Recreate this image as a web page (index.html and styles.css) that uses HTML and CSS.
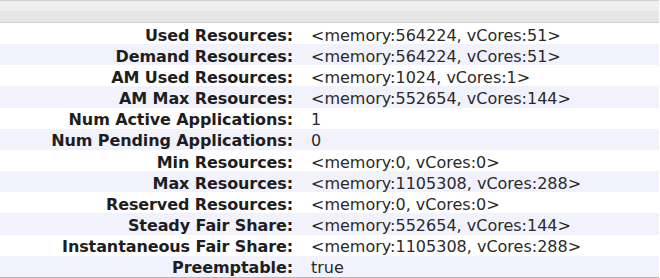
FILE: index.html
```html
<!DOCTYPE html>
<html>
<head>
<meta charset="utf-8">
<link rel="stylesheet" href="styles.css">
</head>
<body>
<div class="panel">
  <div class="panel-head"></div>
  <div class="info">
    <div class="row"><div class="label">Used Resources:</div><div class="value">&lt;memory:564224, vCores:51&gt;</div></div>
    <div class="row"><div class="label">Demand Resources:</div><div class="value">&lt;memory:564224, vCores:51&gt;</div></div>
    <div class="row"><div class="label">AM Used Resources:</div><div class="value">&lt;memory:1024, vCores:1&gt;</div></div>
    <div class="row"><div class="label">AM Max Resources:</div><div class="value">&lt;memory:552654, vCores:144&gt;</div></div>
    <div class="row"><div class="label">Num Active Applications:</div><div class="value">1</div></div>
    <div class="row"><div class="label">Num Pending Applications:</div><div class="value">0</div></div>
    <div class="row"><div class="label">Min Resources:</div><div class="value">&lt;memory:0, vCores:0&gt;</div></div>
    <div class="row"><div class="label">Max Resources:</div><div class="value">&lt;memory:1105308, vCores:288&gt;</div></div>
    <div class="row"><div class="label">Reserved Resources:</div><div class="value">&lt;memory:0, vCores:0&gt;</div></div>
    <div class="row"><div class="label">Steady Fair Share:</div><div class="value">&lt;memory:552654, vCores:144&gt;</div></div>
    <div class="row"><div class="label">Instantaneous Fair Share:</div><div class="value">&lt;memory:1105308, vCores:288&gt;</div></div>
    <div class="row"><div class="label">Preemptable:</div><div class="value">true</div></div>
  </div>
</div>
</body>
</html>
```
FILE: styles.css
```css
html, body {
  margin: 0;
  padding: 0;
  background: #fff;
}
.panel {
  width: 659px;
  font-family: "DejaVu Sans", Verdana, sans-serif;
  font-size: 16px;
  border-bottom: 1px solid #b4b4b4;
}
.panel-head {
  height: 21px;
  border-top: 1px solid #d0d0d0;
  border-bottom: 1px solid #cfcfcf;
  background: linear-gradient(#efefef 0, #efefef 50%, #e6e6e6 50%, #e6e6e6 100%);
}
.info {
  display: grid;
  grid-template-rows: repeat(12, 1fr);
  height: 254px;
}
.row {
  display: grid;
  grid-template-columns: 293px 1fr;
  column-gap: 18px;
  align-items: center;
  line-height: 1;
  padding-top: 4px;
}
.row:nth-child(even) {
  background: #f2f2fd;
}
.label {
  text-align: right;
  font-weight: bold;
  color: #1e1e1e;
  letter-spacing: -0.1px;
}
.value {
  color: #2a2a2a;
}
```
